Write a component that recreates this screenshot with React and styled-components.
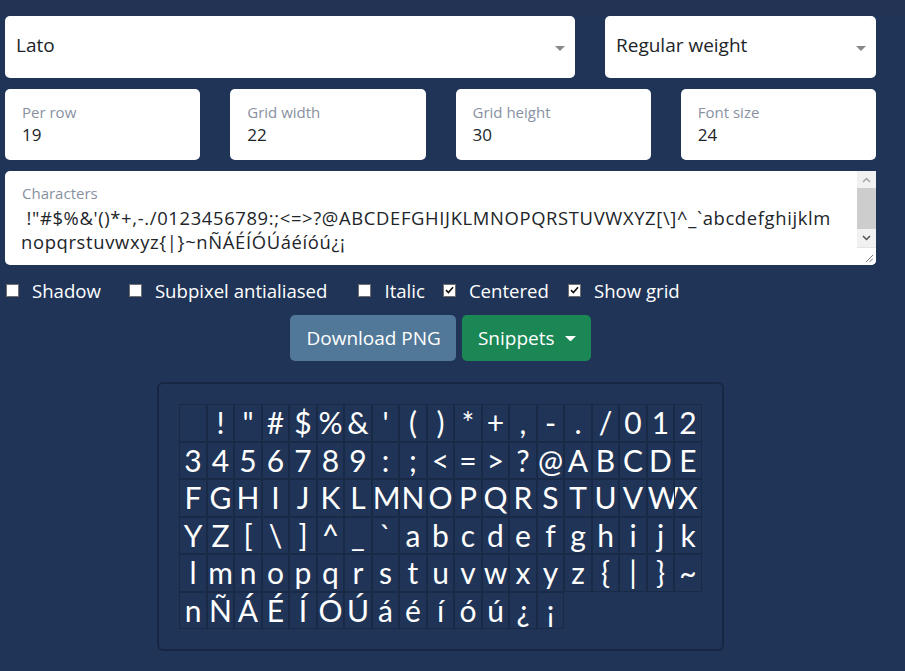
import React from "react";
import styled, { createGlobalStyle } from "styled-components";

const CHARS =
  " !\"#$%&'()*+,-./0123456789:;<=>?@ABCDEFGHIJKLMNOPQRSTUVWXYZ[\\]^_`abcdefghijklmnopqrstuvwxyz{|}~nÑÁÉÍÓÚáéíóú¿¡";

const GlobalStyle = createGlobalStyle`
  html, body {
    margin: 0;
    background: #1f3457;
  }
  body {
    font-family: "Open Sans", "Noto Sans", sans-serif;
  }
`;

const TopBand = styled.div`
  height: 16px;
  background: #233354;
`;

const Main = styled.div`
  width: 871px;
  margin-left: 5px;
  padding-bottom: 22px;
`;

// * selects

const SelectRow = styled.div`
  display: grid;
  grid-template-columns: 570px minmax(0, 1fr);
  gap: 30px;
`;

const SelectBox = styled.div`
  height: 62px;
  box-sizing: border-box;
  display: flex;
  align-items: center;
  justify-content: space-between;
  padding: 0 10px 4px 11px;
  background: #fff;
  border-radius: 5px;
  font-size: 19px;
  color: #212529;
  cursor: pointer;
`;

const Caret = styled.svg`
  width: ${(p) => p.$w || 10}px;
  height: ${(p) => (p.$w ? p.$w / 2 : 5)}px;
  margin-top: ${(p) => (p.$w ? 1 : 7)}px;
  fill: ${(p) => p.$color || "#888"};
`;

// * number inputs

const NumberRow = styled.div`
  display: grid;
  grid-template-columns: repeat(4, minmax(0, 1fr));
  gap: 30px;
  margin-top: 11px;
`;

const NumberBox = styled.label`
  height: 71px;
  box-sizing: border-box;
  display: flex;
  flex-direction: column;
  justify-content: center;
  padding: 0 16px 1px 17px;
  background: #fff;
  border-radius: 5px;
`;

const FieldLabel = styled.span`
  font-size: 15px;
  line-height: 22px;
  color: #8891a1;
`;

const NumberInput = styled.input`
  width: 100%;
  border: 0;
  padding: 0;
  margin: 0;
  outline: none;
  background: transparent;
  font-family: inherit;
  font-size: 17px;
  line-height: 24px;
  color: #212529;
`;

// * characters

const CharField = styled.div`
  display: flex;
  height: 94px;
  margin-top: 11px;
  background: #fff;
  border-radius: 5px 0 5px 5px;
  overflow: hidden;
`;

const CharBody = styled.div`
  flex: 1;
  min-width: 0;
  display: flex;
  flex-direction: column;
  padding: 11px 10px 0 16px;
`;

const CharLabel = styled(FieldLabel)`
  padding-left: 1px;
`;

const CharArea = styled.textarea`
  flex: 1;
  margin-top: 2px;
  padding: 0;
  border: 0;
  outline: none;
  resize: none;
  overflow: hidden;
  font-family: inherit;
  font-size: 18.4px;
  letter-spacing: 0.65px;
  line-height: 24px;
  color: #212529;
  white-space: pre;
`;

const ScrollBar = styled.div`
  width: 19px;
  display: flex;
  flex-direction: column;
  background: #f1f1f1;
`;

const ScrollButton = styled.div`
  height: ${(p) => p.$h}px;
  display: flex;
  align-items: center;
  justify-content: center;

  svg {
    width: 9px;
    height: 6px;
  }
`;

const ScrollThumb = styled.div`
  height: 41px;
  background: #cdcdcd;
`;

const ResizeCorner = styled.div`
  flex: 1;
  background: #fff;
  border-top: 1px solid #e4e4e4;
  display: flex;
  align-items: flex-end;
  justify-content: flex-end;

  svg {
    width: 8px;
    height: 8px;
    margin: 0 3px 3px 0;
  }
`;

// * options

const CheckRow = styled.div`
  display: flex;
  align-items: center;
  height: 26px;
  margin-top: 12px;
  padding-left: 1px;
`;

const CheckItem = styled.label`
  display: flex;
  align-items: center;
  gap: 13px;
  margin-right: ${(p) => p.$mr || 0}px;
  font-size: 18.6px;
  color: #fff;
  cursor: pointer;
`;

const CheckSquare = styled.span`
  width: 13px;
  height: 13px;
  box-sizing: border-box;
  border: 1px solid #6f6f6f;
  background: #fff;
  display: flex;
  align-items: center;
  justify-content: center;
`;

const Tick = styled.svg`
  width: 9px;
  height: 8px;
`;

const ButtonRow = styled.div`
  display: flex;
  justify-content: center;
  gap: 6px;
  margin-top: 12px;
`;

const Button = styled.button`
  height: 46px;
  padding: 0 15px 0 16px;
  border: 0;
  border-radius: 5px;
  background: ${(p) => (p.$green ? "#1a8754" : "#517898")};
  color: #fff;
  font-family: inherit;
  font-size: 19px;
  display: flex;
  align-items: center;
  gap: 10px;
  cursor: pointer;
`;

// * preview

const PreviewWrap = styled.div`
  display: flex;
  justify-content: center;
  margin-top: 21px;
`;

const Panel = styled.div`
  padding: 20px;
  border: 2px solid #182741;
  border-radius: 6px;
`;

const Grid = styled.div`
  display: grid;
  grid-template-columns: repeat(19, 27.5px);
  grid-auto-rows: 37.5px;
  width: 522.5px;
  height: 225px;
  align-content: start;
`;

const Cell = styled.div`
  box-sizing: border-box;
  border: 1px solid #192a46;
  font-family: Lato, sans-serif;
  font-size: 30px;
  line-height: 34px;
  color: #fff;
  text-align: center;
  white-space: pre;
`;

const Check = ({ label, checked, mr }) => (
  <CheckItem $mr={mr}>
    <CheckSquare>
      {checked && (
        <Tick viewBox="0 0 9 8">
          <path d="M1 4.2L3.4 6.5L8 1.2" fill="none" stroke="#111" strokeWidth="1.6" />
        </Tick>
      )}
    </CheckSquare>
    {label}
  </CheckItem>
);

const NumberField = ({ label, value }) => (
  <NumberBox>
    <FieldLabel>{label}</FieldLabel>
    <NumberInput type="text" defaultValue={value} />
  </NumberBox>
);

const CaretIcon = ({ color, w }) => (
  <Caret viewBox="0 0 10 5" $color={color} $w={w}>
    <path d="M0 0H10L5 5Z" />
  </Caret>
);

export default function App() {
  const text = CHARS.slice(0, 78) + "\n" + CHARS.slice(78);
  return (
    <>
      <GlobalStyle />
      <TopBand />
      <Main>
        <SelectRow>
          <SelectBox>
            Lato
            <CaretIcon />
          </SelectBox>
          <SelectBox>
            Regular weight
            <CaretIcon />
          </SelectBox>
        </SelectRow>

        <NumberRow>
          <NumberField label="Per row" value="19" />
          <NumberField label="Grid width" value="22" />
          <NumberField label="Grid height" value="30" />
          <NumberField label="Font size" value="24" />
        </NumberRow>

        <CharField>
          <CharBody>
            <CharLabel>Characters</CharLabel>
            <CharArea defaultValue={text} spellCheck={false} />
          </CharBody>
          <ScrollBar>
            <ScrollButton $h={17}>
              <svg viewBox="0 0 9 6">
                <path d="M1 5L4.5 1.5L8 5" fill="none" stroke="#a3a3a3" strokeWidth="1.5" />
              </svg>
            </ScrollButton>
            <ScrollThumb />
            <ScrollButton $h={18}>
              <svg viewBox="0 0 9 6">
                <path d="M1 1L4.5 4.5L8 1" fill="none" stroke="#505050" strokeWidth="1.5" />
              </svg>
            </ScrollButton>
            <ResizeCorner>
              <svg viewBox="0 0 8 8">
                <path d="M1 8L8 1M4.5 8L8 4.5" stroke="#7a7a7a" strokeWidth="1" />
              </svg>
            </ResizeCorner>
          </ScrollBar>
        </CharField>

        <CheckRow>
          <Check label="Shadow" mr={28} />
          <Check label="Subpixel antialiased" mr={31} />
          <Check label="Italic" mr={18} />
          <Check label="Centered" checked mr={19} />
          <Check label="Show grid" checked />
        </CheckRow>

        <ButtonRow>
          <Button>Download PNG</Button>
          <Button $green>
            Snippets
            <CaretIcon color="#fff" w={11} />
          </Button>
        </ButtonRow>

        <PreviewWrap>
          <Panel>
            <Grid>
              {Array.from(CHARS).map((c, i) => (
                <Cell key={i}>{c}</Cell>
              ))}
            </Grid>
          </Panel>
        </PreviewWrap>
      </Main>
    </>
  );
}
